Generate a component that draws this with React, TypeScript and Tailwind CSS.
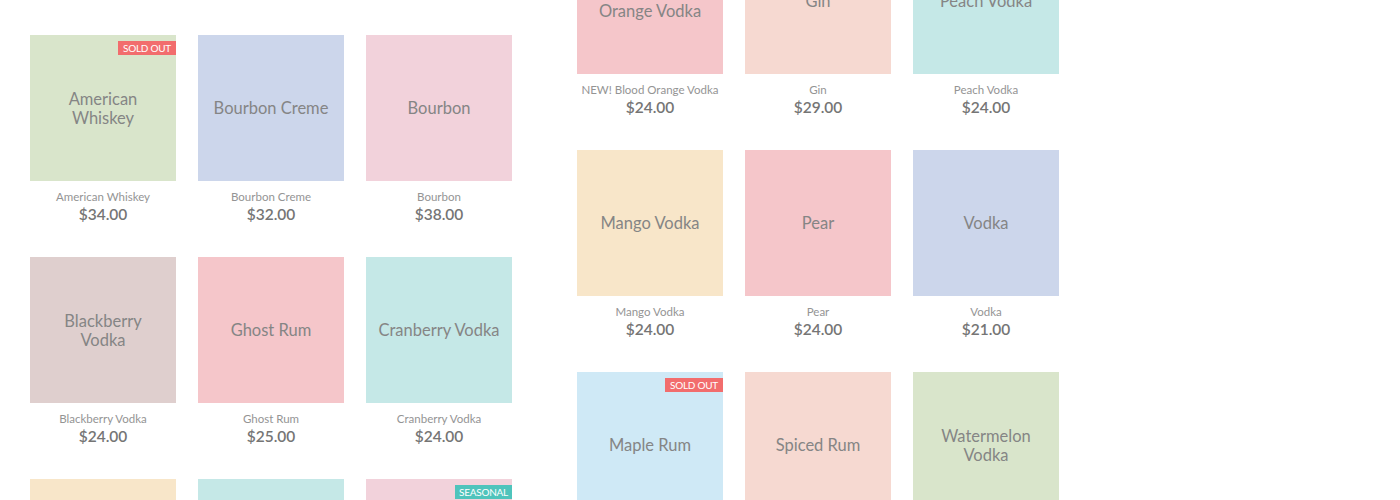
import React from "react";

type P = { lines: string[]; name: string; price: string; bg: string; badge?: "sold" | "seasonal" };

const left: P[] = [
  { lines: ["Cherry Vodka"], name: "Cherry Vodka", price: "$24.00", bg: "bg-[#f5c6ca]" },
  { lines: ["Citrus Vodka"], name: "Citrus Vodka", price: "$24.00", bg: "bg-[#f8e6c9]" },
  { lines: ["Apple Vodka"], name: "Apple Vodka", price: "$24.00", bg: "bg-[#d9e5cc]" },
  { lines: ["American", "Whiskey"], name: "American Whiskey", price: "$34.00", bg: "bg-[#d9e5cb]", badge: "sold" },
  { lines: ["Bourbon Creme"], name: "Bourbon Creme", price: "$32.00", bg: "bg-[#ccd6eb]" },
  { lines: ["Bourbon"], name: "Bourbon", price: "$38.00", bg: "bg-[#f2d2db]" },
  { lines: ["Blackberry", "Vodka"], name: "Blackberry Vodka", price: "$24.00", bg: "bg-[#dfcfce]" },
  { lines: ["Ghost Rum"], name: "Ghost Rum", price: "$25.00", bg: "bg-[#f5c6ca]" },
  { lines: ["Cranberry Vodka"], name: "Cranberry Vodka", price: "$24.00", bg: "bg-[#c5e8e7]" },
  { lines: ["Lemon Vodka"], name: "Lemon Vodka", price: "$24.00", bg: "bg-[#f8e6c9]" },
  { lines: ["Mint Vodka"], name: "Mint Vodka", price: "$24.00", bg: "bg-[#c5e8e7]" },
  { lines: ["Holiday Spice"], name: "Holiday Spice", price: "$26.00", bg: "bg-[#f2d2db]", badge: "seasonal" },
];

const right: P[] = [
  { lines: ["NEW! Blood", "Orange Vodka"], name: "NEW! Blood Orange Vodka", price: "$24.00", bg: "bg-[#f5c6ca]" },
  { lines: ["Gin"], name: "Gin", price: "$29.00", bg: "bg-[#f6d9d1]" },
  { lines: ["Peach Vodka"], name: "Peach Vodka", price: "$24.00", bg: "bg-[#c5e8e7]" },
  { lines: ["Mango Vodka"], name: "Mango Vodka", price: "$24.00", bg: "bg-[#f8e6c9]" },
  { lines: ["Pear"], name: "Pear", price: "$24.00", bg: "bg-[#f5c6ca]" },
  { lines: ["Vodka"], name: "Vodka", price: "$21.00", bg: "bg-[#ccd6eb]" },
  { lines: ["Maple Rum"], name: "Maple Rum", price: "$24.00", bg: "bg-[#cfe9f6]", badge: "sold" },
  { lines: ["Spiced Rum"], name: "Spiced Rum", price: "$24.00", bg: "bg-[#f6d9d1]" },
  { lines: ["Watermelon", "Vodka"], name: "Watermelon Vodka", price: "$24.00", bg: "bg-[#d9e5cb]" },
];

function Card({ p }: { p: P }) {
  return (
    <div className="flex flex-col items-center w-[146px] h-[222px]">
      <div className={`relative w-[146px] h-[146px] pt-[2px] ${p.bg} flex flex-col items-center justify-center`}>
        {p.badge === "sold" && (
          <span className="absolute right-0 top-[6px] h-[14px] px-[5px] bg-[#f26d6d] text-white text-[10px] leading-[14px] tracking-tight">SOLD OUT</span>
        )}
        {p.badge === "seasonal" && (
          <span className="absolute right-0 top-[6px] h-[14px] px-[4px] bg-[#4fc4bc] text-white text-[10px] leading-[14px] tracking-tight">SEASONAL</span>
        )}
        {p.lines.map((l, i) => (
          <div key={i} className="text-[16.5px] leading-[19.5px] text-[#858585] whitespace-nowrap">{l}</div>
        ))}
      </div>
      <div className="mt-[9px] text-[11.5px] leading-[14px] text-[#949494] whitespace-nowrap">{p.name}</div>
      <div className="text-[15.5px] leading-[20px] font-semibold text-[#757575]">{p.price}</div>
    </div>
  );
}

export default function App() {
  return (
    <div className="w-[1400px] h-[500px] overflow-hidden bg-white" style={{ fontFamily: "Lato, 'Open Sans', sans-serif" }}>
      <div className="flex items-start gap-[65px] pl-[30px]">
        <div className="grid grid-cols-[146px_146px_146px] gap-x-[22px] mt-[-187px]">
          {left.map((p, i) => <Card key={i} p={p} />)}
        </div>
        <div className="grid grid-cols-[146px_146px_146px] gap-x-[22px] mt-[-72px]">
          {right.map((p, i) => <Card key={i} p={p} />)}
        </div>
      </div>
    </div>
  );
}
